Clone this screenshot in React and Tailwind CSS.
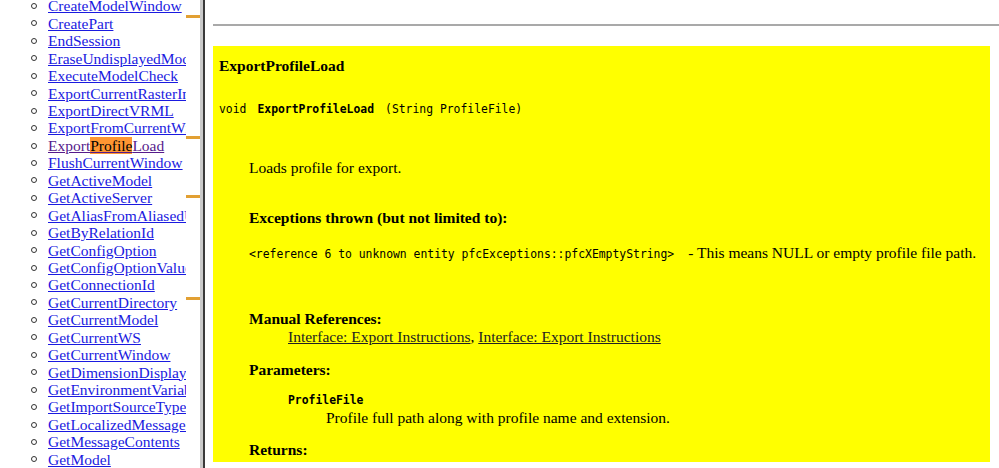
import React from 'react';

const serif = { fontFamily: '"Liberation Serif", "Times New Roman", serif' };
const mono = { fontFamily: '"DejaVu Sans Mono", "Liberation Mono", monospace' };

const methods = [
  'CreateModelWindow',
  'CreatePart',
  'EndSession',
  'EraseUndisplayedModels',
  'ExecuteModelCheck',
  'ExportCurrentRasterImage',
  'ExportDirectVRML',
  'ExportFromCurrentWindow',
  'ExportProfileLoad',
  'FlushCurrentWindow',
  'GetActiveModel',
  'GetActiveServer',
  'GetAliasFromAliasedUrl',
  'GetByRelationId',
  'GetConfigOption',
  'GetConfigOptionValues',
  'GetConnectionId',
  'GetCurrentDirectory',
  'GetCurrentModel',
  'GetCurrentWS',
  'GetCurrentWindow',
  'GetDimensionDisplayMode',
  'GetEnvironmentVariable',
  'GetImportSourceType',
  'GetLocalizedMessageContents',
  'GetMessageContents',
  'GetModel',
];

// find-in-page markers on the nav frame's scrollbar
const markers = [15, 136, 195, 297];

const NavItem = ({ name }) => {
  const current = name === 'ExportProfileLoad';
  return (
    <li className="flex items-center h-[17.44px] whitespace-nowrap">
      <span className="ml-[31px] w-[6px] h-[6px] shrink-0 rounded-full border border-[#333]" />
      <a
        href="#"
        className={`ml-[11px] underline ${current ? 'text-[#551a8b]' : 'text-[#1a1ae0]'}`}
      >
        {current ? (
          <>
            Export<span className="bg-[#ff9632] text-black">Profile</span>Load
          </>
        ) : (
          name
        )}
      </a>
    </li>
  );
};

const Line = ({ className = '', style, children }) => (
  <div className={`leading-[18px] whitespace-nowrap ${className}`} style={style}>
    {children}
  </div>
);

export default function App() {
  return (
    <div className="flex w-[999px] h-[468px] overflow-hidden bg-white text-black" style={serif}>
      {/* left nav frame */}
      <div className="relative w-[186px] h-full overflow-hidden bg-white">
        <ul className="-mt-[2.7px] text-[15.5px]">
          {methods.map((m) => (
            <NavItem key={m} name={m} />
          ))}
        </ul>
      </div>
      <div className="relative w-[14px] h-full bg-white">
        {markers.map((y) => (
          <div key={y} className="absolute left-0 w-[14px] h-[3px] bg-[#e2a033]" style={{ top: y }} />
        ))}
      </div>
      <div className="w-[3px] h-full bg-[#cacaca]" />
      <div className="w-[2px] h-full bg-[#3a3a3a]" />

      {/* right content frame */}
      <div className="flex-1 h-full pl-[8px]">
        <div className="h-[24px]" />
        <div className="h-[2px] bg-[#a9a9a9] -mr-[10px]" />
        <div className="h-[20px]" />
        <div className="w-[777px] bg-[#ffff00] pl-[6px] pt-[11px] pb-[3px] text-[15.5px]">
          <Line className="font-bold">ExportProfileLoad</Line>
          <Line className="mt-[25px] text-[11.4px]" style={mono}>
            void<span className="ml-[11px] font-bold">ExportProfileLoad</span>
            <span className="ml-[11px]">(String ProfileFile)</span>
          </Line>
          <Line className="mt-[41px] pl-[30px]">Loads profile for export.</Line>
          <Line className="mt-[32px] pl-[30px] font-bold">Exceptions thrown (but not limited to):</Line>
          <Line className="mt-[17px] pl-[30px]">
            <span className="text-[11.4px]" style={mono}>
              &lt;reference 6 to unknown entity pfcExceptions::pfcXEmptyString&gt;
            </span>
            <span className="ml-[14px]">- This means NULL or empty profile file path.</span>
          </Line>
          <Line className="mt-[47px] pl-[30px] font-bold">Manual References:</Line>
          <Line className="pl-[69px]">
            <a href="#" className="underline text-[#222]">Interface: Export Instructions</a>,{' '}
            <a href="#" className="underline text-[#222]">Interface: Export Instructions</a>
          </Line>
          <Line className="mt-[15px] pl-[30px] font-bold">Parameters:</Line>
          <div className="mt-[13px] pl-[69px] leading-[17px] text-[11.4px] font-bold" style={mono}>
            ProfileFile
          </div>
          <Line className="pl-[107px]">Profile full path along with profile name and extension.</Line>
          <Line className="mt-[14px] pl-[30px] font-bold">Returns:</Line>
        </div>
      </div>
    </div>
  );
}
